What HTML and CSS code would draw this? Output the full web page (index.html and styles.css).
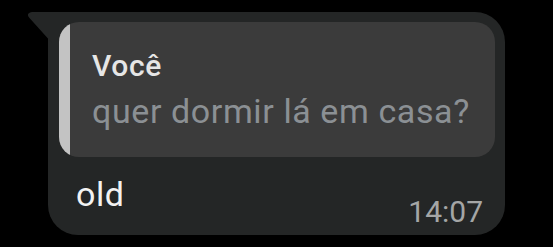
FILE: index.html
```html
<!DOCTYPE html>
<html lang="pt">
<head>
<meta charset="utf-8">
<link rel="stylesheet" href="styles.css">
</head>
<body>
<div class="bubble">
  <svg class="tail" width="24" height="34" viewBox="0 0 24 34"><path d="M4 0 H24 V31 L1.5 6 Q-1 3 0.5 1.5 Q1.8 0 4 0 Z" fill="#242626"/></svg>
  <div class="quote">
    <div class="bar"></div>
    <div class="quote-body">
      <div class="author">Você</div>
      <div class="quoted">quer dormir lá em casa?</div>
    </div>
  </div>
  <div class="footer">
    <span class="msg">old</span>
    <span class="time">14:07</span>
  </div>
</div>
</body>
</html>
```

FILE: styles.css
```css
html, body {
  margin: 0;
  padding: 0;
  background: #000;
  font-family: Roboto, "Noto Sans", sans-serif;
}
body {
  width: 553px;
  height: 247px;
  overflow: hidden;
}
.bubble {
  position: relative;
  box-sizing: border-box;
  margin: 12px 0 0 48px;
  width: 457px;
  height: 223px;
  background: #242626;
  border-radius: 0 30px 30px 30px;
  padding: 10px 10px 0 11px;
}
.tail {
  position: absolute;
  left: -20px;
  top: 0;
}
.quote {
  display: flex;
  height: 135px;
  background: #3b3b3b;
  border-radius: 20px;
  overflow: hidden;
}
.bar {
  width: 11px;
  background: #c3c3c3;
  flex: none;
}
.quote-body {
  padding: 27px 0 0 22px;
}
.author {
  font-size: 30px;
  line-height: 34px;
  font-weight: 500;
  letter-spacing: 0.6px;
  color: #e6e6e6;
}
.quoted {
  margin-top: 8px;
  font-size: 34px;
  line-height: 40px;
  letter-spacing: 0.6px;
  color: #8b9094;
  white-space: nowrap;
}
.footer {
  display: flex;
  justify-content: space-between;
  padding: 0 12px 0 17px;
  margin-top: 17px;
}
.msg {
  font-size: 34px;
  line-height: 40px;
  letter-spacing: 0.6px;
  color: #f2f2f2;
}
.time {
  margin-top: 20px;
  font-size: 30px;
  line-height: 36px;
  color: #a4a6a6;
}
```
